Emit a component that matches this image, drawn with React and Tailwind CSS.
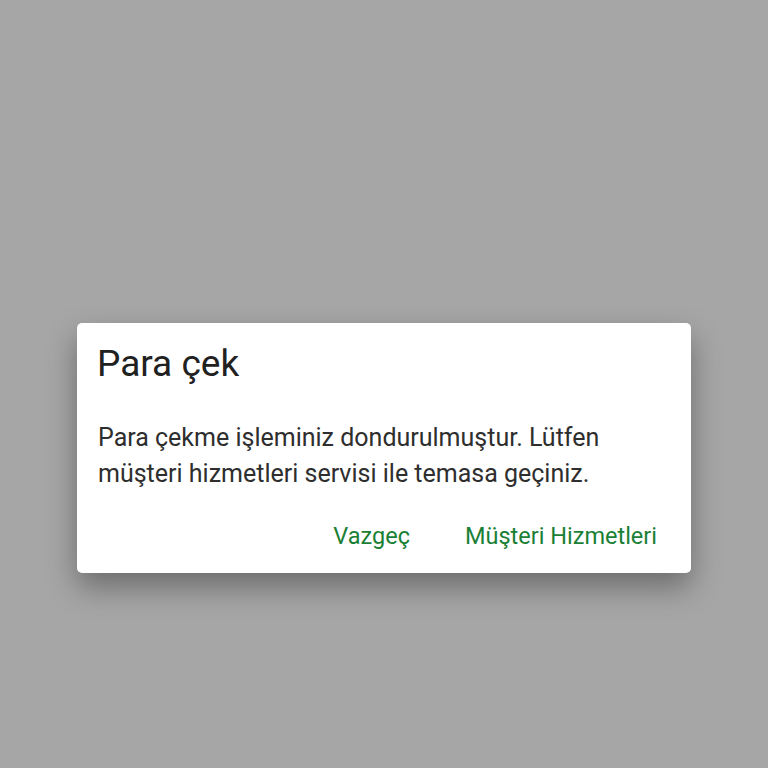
export default function App() {
  return (
    <div className="w-[768px] h-[768px] bg-[#a6a6a6] flex flex-col items-center" style={{ fontFamily: 'Roboto, sans-serif' }}>
      <div className="mt-[323px] w-[614px] h-[250px] bg-white rounded-[5px] shadow-[0_14px_30px_rgba(0,0,0,0.35)] flex flex-col">
        <h2 className="pl-[20px] pt-[19px] text-[37px] leading-[44px] text-[#212121]">Para çek</h2>
        <p className="pl-[21px] pr-[20px] mt-[34px] text-[25px] leading-[36px] text-[#2e2e2e]">
          Para çekme işleminiz dondurulmuştur. Lütfen müşteri hizmetleri servisi ile temasa geçiniz.
        </p>
        <div className="mt-[29px] flex justify-end items-center gap-[55px] pr-[34px] text-[23.5px] leading-[30px] text-[#1b7f35]">
          <button>Vazgeç</button>
          <button>Müşteri Hizmetleri</button>
        </div>
      </div>
    </div>
  );
}
